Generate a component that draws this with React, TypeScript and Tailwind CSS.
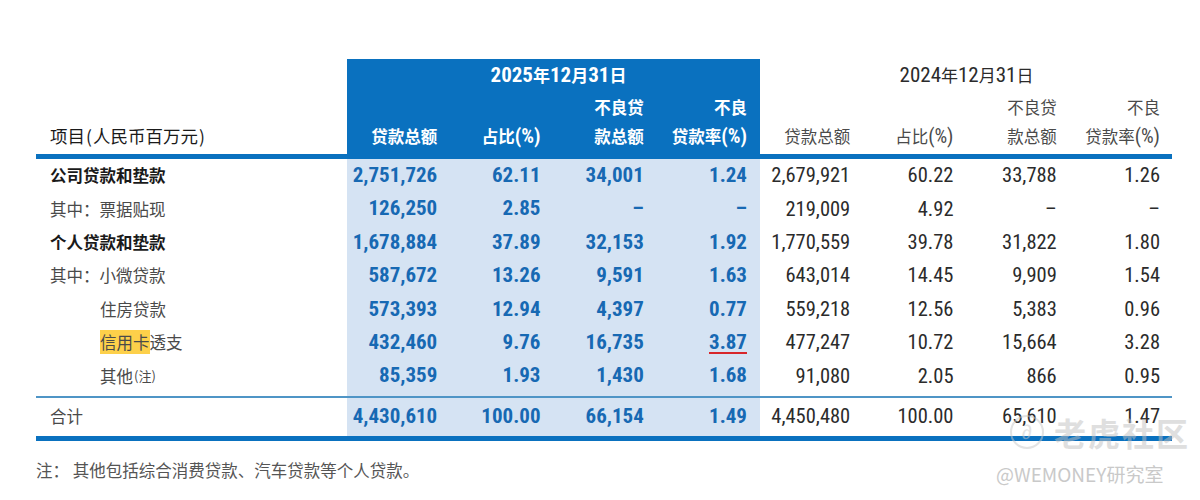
import React from 'react';

const NUM = "font-['Liberation_Sans_Narrow','Arial_Narrow','Roboto_Condensed',sans-serif]";
const CJK = "font-['Noto_Sans_CJK_SC','Noto_Sans',sans-serif]";

type Row = {
  label: React.ReactNode;
  bold?: boolean;
  indent?: boolean;
  cur: string[];
  prev: string[];
};

const rows: Row[] = [
  { label: '公司贷款和垫款', bold: true, cur: ['2,751,726', '62.11', '34,001', '1.24'], prev: ['2,679,921', '60.22', '33,788', '1.26'] },
  { label: '其中：票据贴现', cur: ['126,250', '2.85', '–', '–'], prev: ['219,009', '4.92', '–', '–'] },
  { label: '个人贷款和垫款', bold: true, cur: ['1,678,884', '37.89', '32,153', '1.92'], prev: ['1,770,559', '39.78', '31,822', '1.80'] },
  { label: '其中：小微贷款', cur: ['587,672', '13.26', '9,591', '1.63'], prev: ['643,014', '14.45', '9,909', '1.54'] },
  { label: '住房贷款', indent: true, cur: ['573,393', '12.94', '4,397', '0.77'], prev: ['559,218', '12.56', '5,383', '0.96'] },
  {
    label: (
      <>
        <span className="bg-[#fdd04a]">信用卡</span>透支
      </>
    ),
    indent: true,
    cur: ['432,460', '9.76', '16,735', '3.87'],
    prev: ['477,247', '10.72', '15,664', '3.28'],
  },
  {
    label: (
      <>
        其他<sup className="text-[13px] relative -top-[2px] ml-[1px]">(注)</sup>
      </>
    ),
    indent: true,
    cur: ['85,359', '1.93', '1,430', '1.68'],
    prev: ['91,080', '2.05', '866', '0.95'],
  },
];

function Label({ row }: { row: Row }) {
  return (
    <div
      className={`w-[311px] shrink-0 ${CJK} text-[16.5px] ${row.indent ? 'pl-[64px]' : 'pl-[14px]'} ${
        row.bold ? 'font-bold text-[#1a1a1a]' : 'text-[#4a4a4a]'
      }`}
    >
      {row.label}
    </div>
  );
}

function CurCells({ vals, underlineLast }: { vals: string[]; underlineLast?: boolean }) {
  return (
    <div className="flex w-[413px] shrink-0 self-stretch items-center bg-[#d5e3f3]">
      {vals.map((v, i) => (
        <div key={i} className={`w-[103.25px] text-right pr-[13px] ${NUM} font-bold text-[21px] text-[#1769b3]`}>
          {underlineLast && i === 3 ? (
            <span className="border-b-2 border-[#d8262a] leading-[20px] inline-block">{v}</span>
          ) : (
            v
          )}
        </div>
      ))}
    </div>
  );
}

function PrevCells({ vals }: { vals: string[] }) {
  return (
    <div className="flex w-[413px] shrink-0 items-center">
      {vals.map((v, i) => (
        <div key={i} className={`w-[103.25px] text-right pr-[13px] ${NUM} text-[20.5px] text-[#2b2b2b]`}>
          {v}
        </div>
      ))}
    </div>
  );
}

function HeadCols({ white }: { white?: boolean }) {
  const c = white ? 'text-white' : 'text-[#4a4a4a]';
  return (
    <div className={`flex items-end ${CJK} text-[16.5px] leading-[29px] ${c}`}>
      <div className="w-[103.25px] text-right pr-[13px]">贷款总额</div>
      <div className="w-[103.25px] text-right pr-[13px]">
        占比<span className={NUM + ' text-[20px]'}>(%)</span>
      </div>
      <div className="w-[103.25px] text-right pr-[13px]">
        不良贷
        <br />
        款总额
      </div>
      <div className="w-[103.25px] text-right pr-[13px]">
        不良
        <br />
        贷款率<span className={NUM + ' text-[20px]'}>(%)</span>
      </div>
    </div>
  );
}

export default function App() {
  return (
    <div className="w-[1200px] h-[500px] bg-white relative overflow-hidden">
      <div className="pt-[59px] pl-[36px] w-[1172px]">
        {/* header */}
        <div className="flex h-[95px]">
          <div className={`w-[311px] shrink-0 flex items-end pb-[5px] pl-[14px] ${CJK} text-[17.5px] text-[#1a1a1a]`}>
            项目<span className="px-[1px]">(</span>人民币百万元<span className="px-[1px]">)</span>
          </div>
          <div className="w-[413px] shrink-0 bg-[#0a71bf] flex flex-col justify-between pt-[4px] pb-[3px]">
            <div className={`text-center text-white font-bold ${NUM} text-[21px] leading-[24px] pl-[10px]`}>
              2025<span className={CJK + ' text-[17px]'}>年</span>12<span className={CJK + ' text-[17px]'}>月</span>31
              <span className={CJK + ' text-[17px]'}>日</span>
            </div>
            <div className="font-bold">
              <HeadCols white />
            </div>
          </div>
          <div className="w-[413px] shrink-0 flex flex-col justify-between pt-[4px] pb-[3px]">
            <div className={`text-center text-[#2b2b2b] ${NUM} text-[21px] leading-[24px]`}>
              2024<span className={CJK + ' text-[17px]'}>年</span>12<span className={CJK + ' text-[17px]'}>月</span>31
              <span className={CJK + ' text-[17px]'}>日</span>
            </div>
            <HeadCols />
          </div>
        </div>
        <div className="h-[5px] bg-[#0a71bf]" />

        {/* body */}
        {rows.map((r, i) => (
          <div key={i} className="flex h-[33.4px] items-center">
            <Label row={r} />
            <CurCells vals={r.cur} underlineLast={i === 5} />
            <PrevCells vals={r.prev} />
          </div>
        ))}
        <div className="flex h-[3px]">
          <div className="w-[311px]" />
          <div className="w-[413px] bg-[#d5e3f3]" />
        </div>
        <div className="h-[2px] bg-[#4f95c6]" />
        <div className="flex h-[38px] items-center">
          <Label row={{ label: '合计', cur: [], prev: [] }} />
          <CurCells vals={['4,430,610', '100.00', '66,154', '1.49']} />
          <PrevCells vals={['4,450,480', '100.00', '65,610', '1.47']} />
        </div>
        <div className="h-[5px] bg-[#0a71bf]" />
      </div>

      <div className={`pl-[36px] pt-[17px] ${CJK} text-[16.5px] text-[#555]`}>注：  其他包括综合消费贷款、汽车贷款等个人贷款。</div>

      {/* watermarks */}
      <div className="absolute left-[1010px] top-[408px] flex items-center gap-[10px] opacity-50 pointer-events-none">
        <div className="w-[34px] h-[34px] rounded-full border-[2px] border-[#c8c8c8] flex items-center justify-center text-[#c8c8c8] text-[20px] italic">
          ∂
        </div>
        <span className={`${CJK} font-bold text-[32px] text-[#c0c0c0] tracking-[2px]`}>老虎社区</span>
      </div>
      <div className={`absolute left-[996px] top-[460px] ${CJK} text-[19px] text-[#c9c9c9]`}>@WEMONEY研究室</div>
    </div>
  );
}
